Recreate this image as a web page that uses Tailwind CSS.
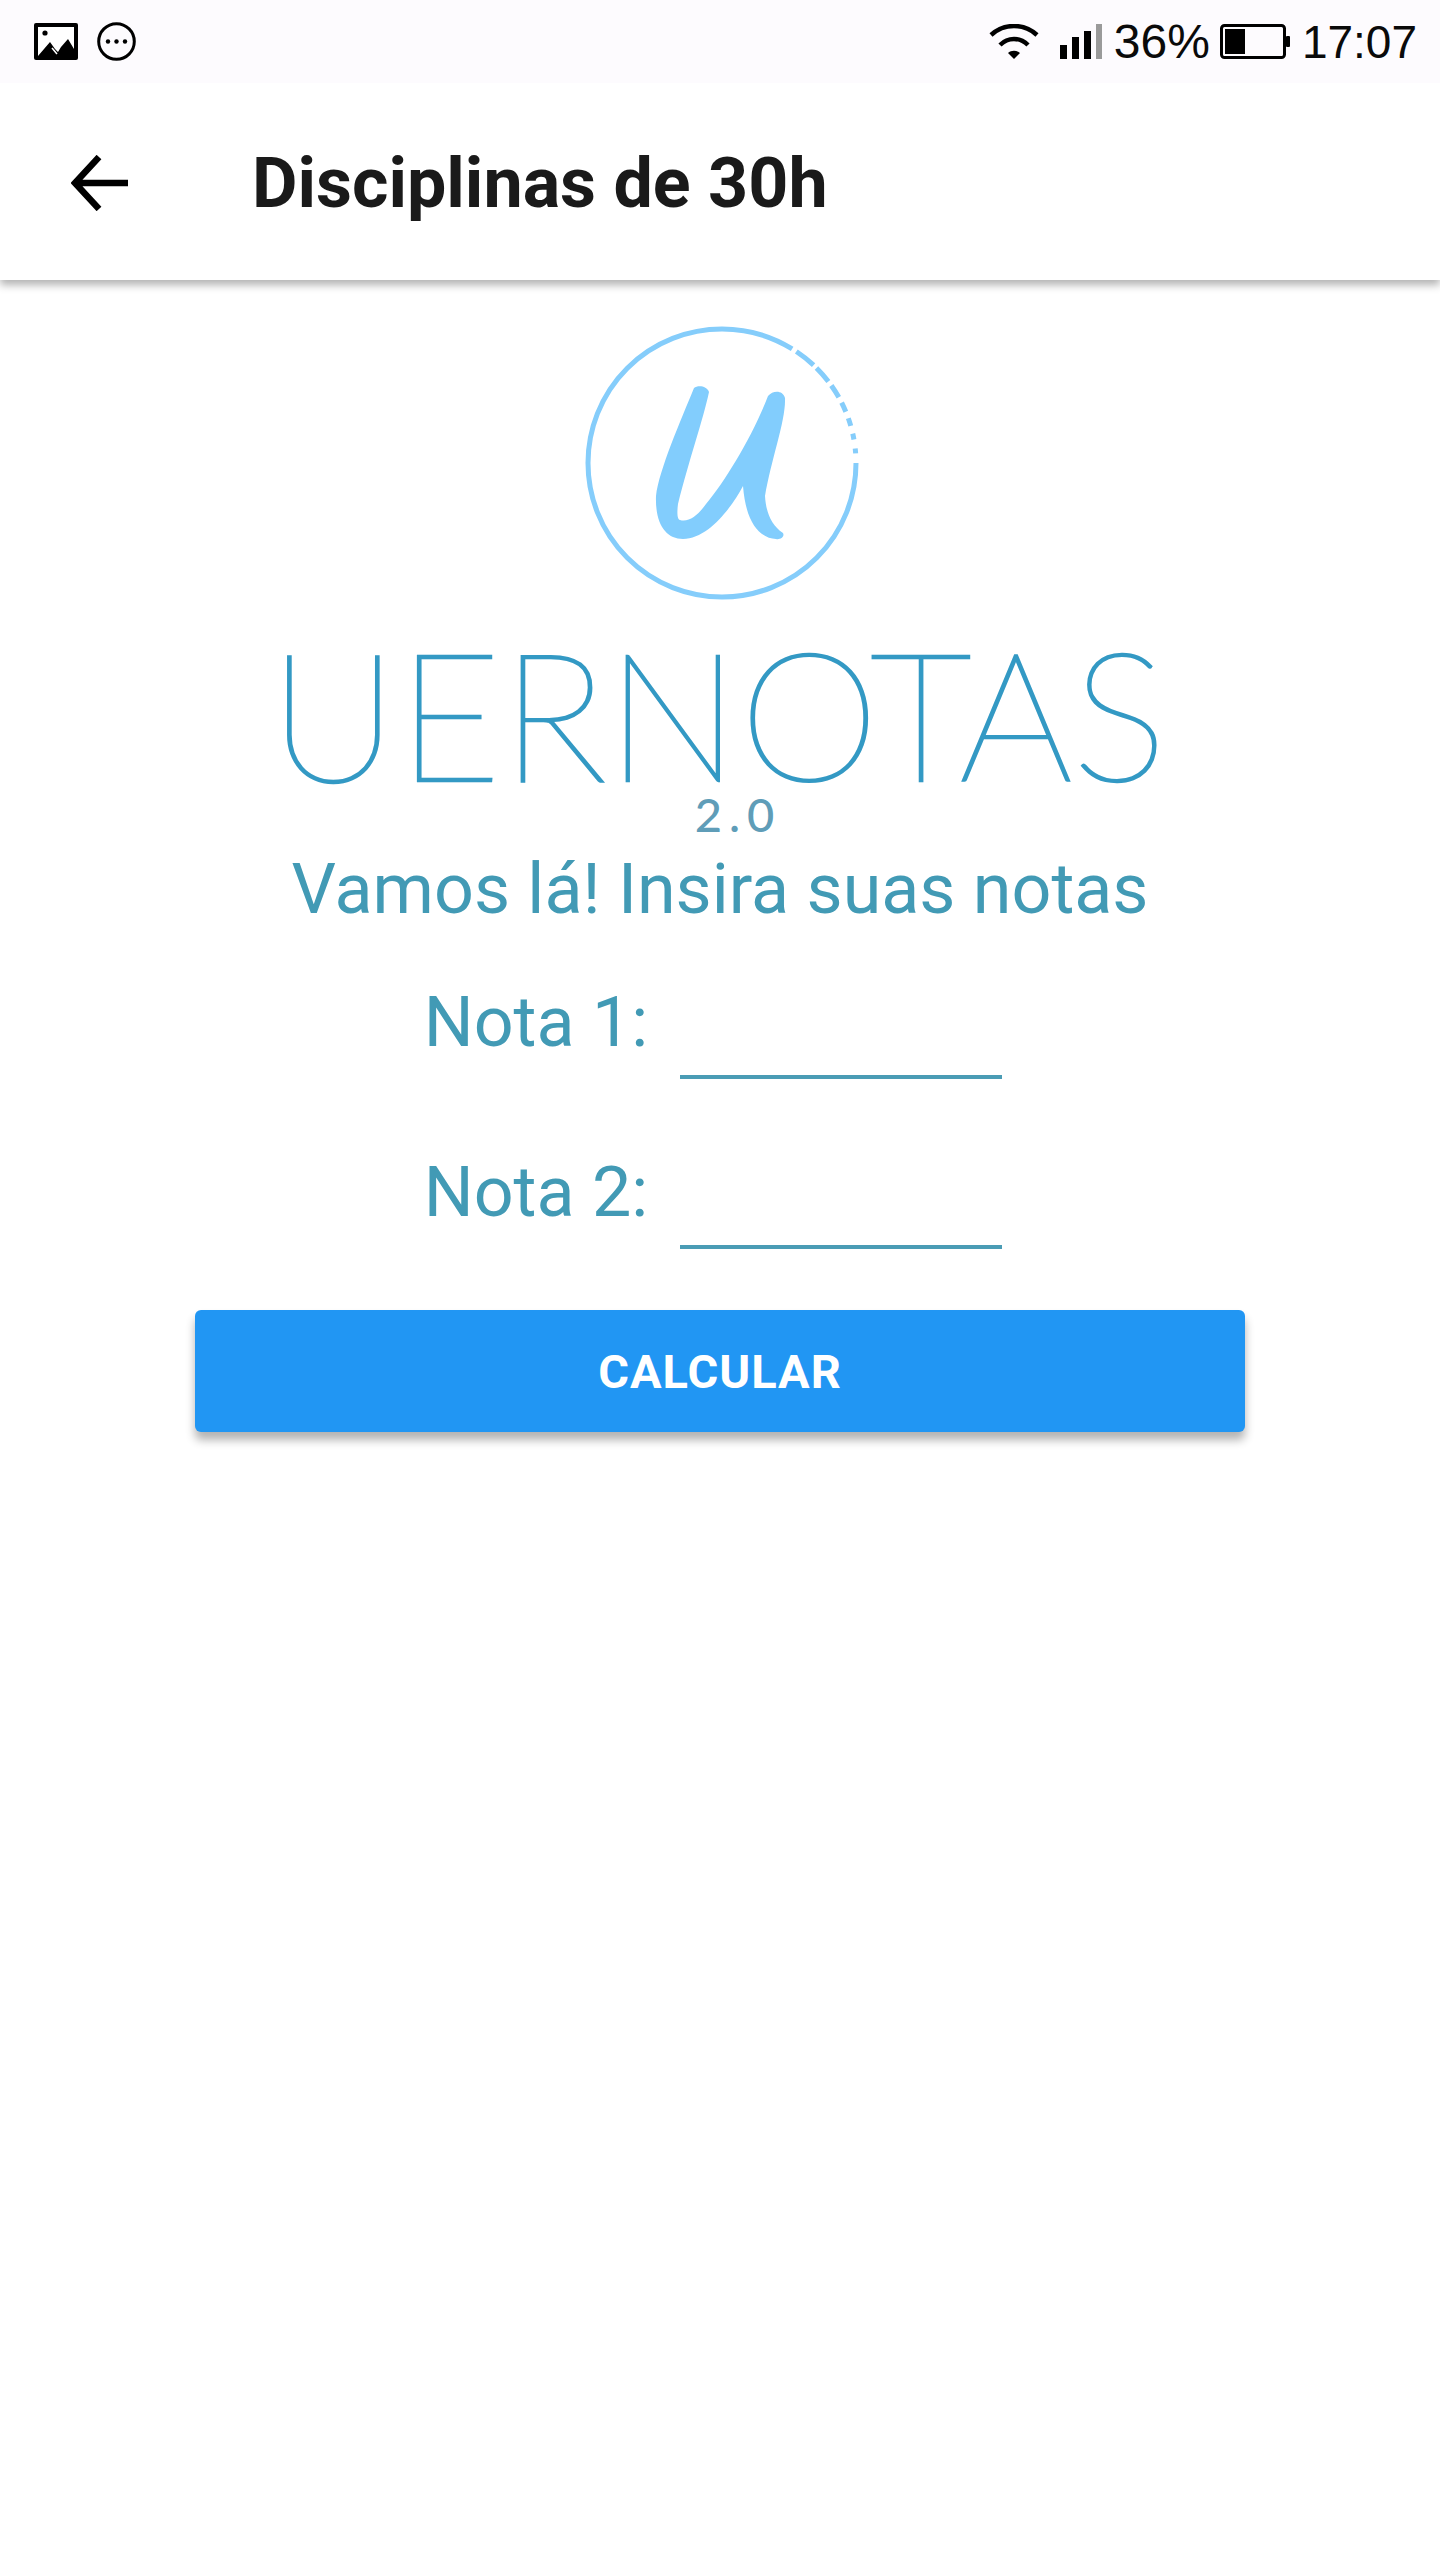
<!DOCTYPE html>
<html lang="pt">
<head>
  <meta charset="UTF-8" />
  <meta name="viewport" content="width=device-width, initial-scale=1.0"/>
  <title>Disciplinas de 30h</title>
  <script src="https://cdn.jsdelivr.net/npm/@tailwindcss/browser@4"></script>
</head>
<body class="bg-white min-h-[2560px] font-['Roboto',sans-serif]">

  <!-- status bar -->
  <div class="relative z-10 h-[83px] bg-[#fdfbfe] flex items-center justify-between pl-[34px] pr-[23px] font-['Liberation_Sans',sans-serif] text-[46px] leading-none text-[#0a0a0a]">
    <div class="flex items-center gap-[19px]">
      <svg class="w-[44px] h-[37px]" viewBox="0 0 44 37">
        <rect width="44" height="37" rx="2" fill="#000"/>
        <path d="M4 4h36v22l-6-10-7 8-3 5-3-3-5-7-12 14z" fill="#fff"/>
        <circle cx="11" cy="10" r="2.6" fill="#000"/>
        <path d="M18 25l5 6" stroke="#fff" stroke-width="1.5"/>
      </svg>
      <svg class="w-[39px] h-[39px]" viewBox="0 0 39 39">
        <circle cx="19.5" cy="19.5" r="17.8" fill="none" stroke="#000" stroke-width="3"/>
        <circle cx="11" cy="19.5" r="2.2" fill="#000"/>
        <circle cx="19.5" cy="19.5" r="2.2" fill="#000"/>
        <circle cx="28" cy="19.5" r="2.2" fill="#000"/>
      </svg>
    </div>
    <div class="flex items-center">
      <svg class="w-[50px] h-[35px]" viewBox="0 0 50 35">
        <path d="M2 11C15 -1 35 -1 48 11" fill="none" stroke="#000" stroke-width="4.5"/>
        <path d="M11 21C19 13 31 13 39 21" fill="none" stroke="#000" stroke-width="4.5"/>
        <path d="M19 29C22 26 28 26 31 29L25 35z" fill="#000"/>
      </svg>
      <div class="ml-[21px] flex items-end gap-[5px] h-[35px]">
        <div class="w-[7px] h-[14px] bg-black"></div>
        <div class="w-[7px] h-[22px] bg-black"></div>
        <div class="w-[7px] h-[28px] bg-black"></div>
        <div class="w-[6px] h-[35px] bg-[#9a9a9a]"></div>
      </div>
      <span class="ml-[12px] text-[48px]">36%</span>
      <svg class="ml-[10px] w-[70px] h-[35px]" viewBox="0 0 70 35">
        <rect x="1.5" y="1.5" width="63" height="32" rx="3" fill="none" stroke="#000" stroke-width="3"/>
        <rect x="5" y="5" width="20" height="25" fill="#000"/>
        <rect x="66" y="12" width="4" height="11" rx="1" fill="#000"/>
      </svg>
      <span class="ml-[12px]">17:07</span>
    </div>
  </div>

  <!-- app bar -->
  <div class="relative h-[197px] bg-white flex items-center shadow-[0_5px_8px_rgba(0,0,0,0.3)]">
    <svg class="ml-[71px] mt-[3px] w-[57px] h-[56px]" viewBox="0 0 57 56">
      <path d="M57 28H5M28 2L4 28l24 26" fill="none" stroke="#000" stroke-width="6.5"/>
    </svg>
    <h1 class="ml-[124px] pt-[3px] text-[70px] font-bold text-[#1a1a1a] leading-none">Disciplinas de 30h</h1>
  </div>

  <!-- logo -->
  <div class="flex flex-col items-center">
    <svg class="mt-[40px] w-[280px] h-[285px] ml-[2px]" viewBox="0 0 280 285">
      <circle cx="141" cy="143" r="134" fill="none" stroke="#85cdfb" stroke-width="5" stroke-dasharray="705 5 22 4 18 5 14 6 10 7 8 8 6 9 5 20"/>
      <path d="M113 68C117 65 126 66 128 72C122 100 108 140 97 184C96 192 96 199 99 200C108 203 118 194 125 184C145 160 172 115 187 76C192 70 202 70 204 78C205 100 190 140 184 176C185 192 190 205 202 213C204 217 199 220 195 219C180 218 165 205 162 166C152 185 128 219 102 219C85 219 74 204 75 176C78 150 100 100 113 68Z" fill="#82cdfd"/>
    </svg>
    <div class="mt-[32px] ml-[-4px] h-[150px] text-[178px] leading-[150px] font-['Lato',sans-serif] font-thin text-[#3399c4] [-webkit-text-stroke:2.5px_#3399c4] whitespace-nowrap">UERNOTAS</div>
    <div class="mt-[2px] ml-[36px] h-[50px] text-[47px] leading-[50px] tracking-[7px] font-['Lato',sans-serif] font-medium text-[#5f9db8] whitespace-nowrap">2.0</div>
    <p class="mt-[9px] text-[70px] leading-[82px] text-[#429ab5] whitespace-nowrap">Vamos lá! Insira suas notas</p>
  </div>

  <!-- form -->
  <div class="mt-[51px] flex flex-col items-center gap-[72px]">
    <div class="flex items-start gap-[32px] ml-[-14px]">
      <label class="text-[70px] leading-[82px] text-[#429ab5]">Nota 1:</label>
      <div class="w-[322px] h-[98px] border-b-[4px] border-[#4a9cb5]"></div>
    </div>
    <div class="flex items-start gap-[32px] ml-[-14px]">
      <label class="text-[70px] leading-[82px] text-[#429ab5]">Nota 2:</label>
      <div class="w-[322px] h-[98px] border-b-[4px] border-[#4a9cb5]"></div>
    </div>
  </div>

  <button class="block mx-auto mt-[61px] pt-[3px] w-[1050px] h-[122px] bg-[#2196f3] rounded-[6px] text-white text-[47px] tracking-[1px] font-bold shadow-[0_8px_10px_rgba(0,0,0,0.3)]">CALCULAR</button>

</body>
</html>
